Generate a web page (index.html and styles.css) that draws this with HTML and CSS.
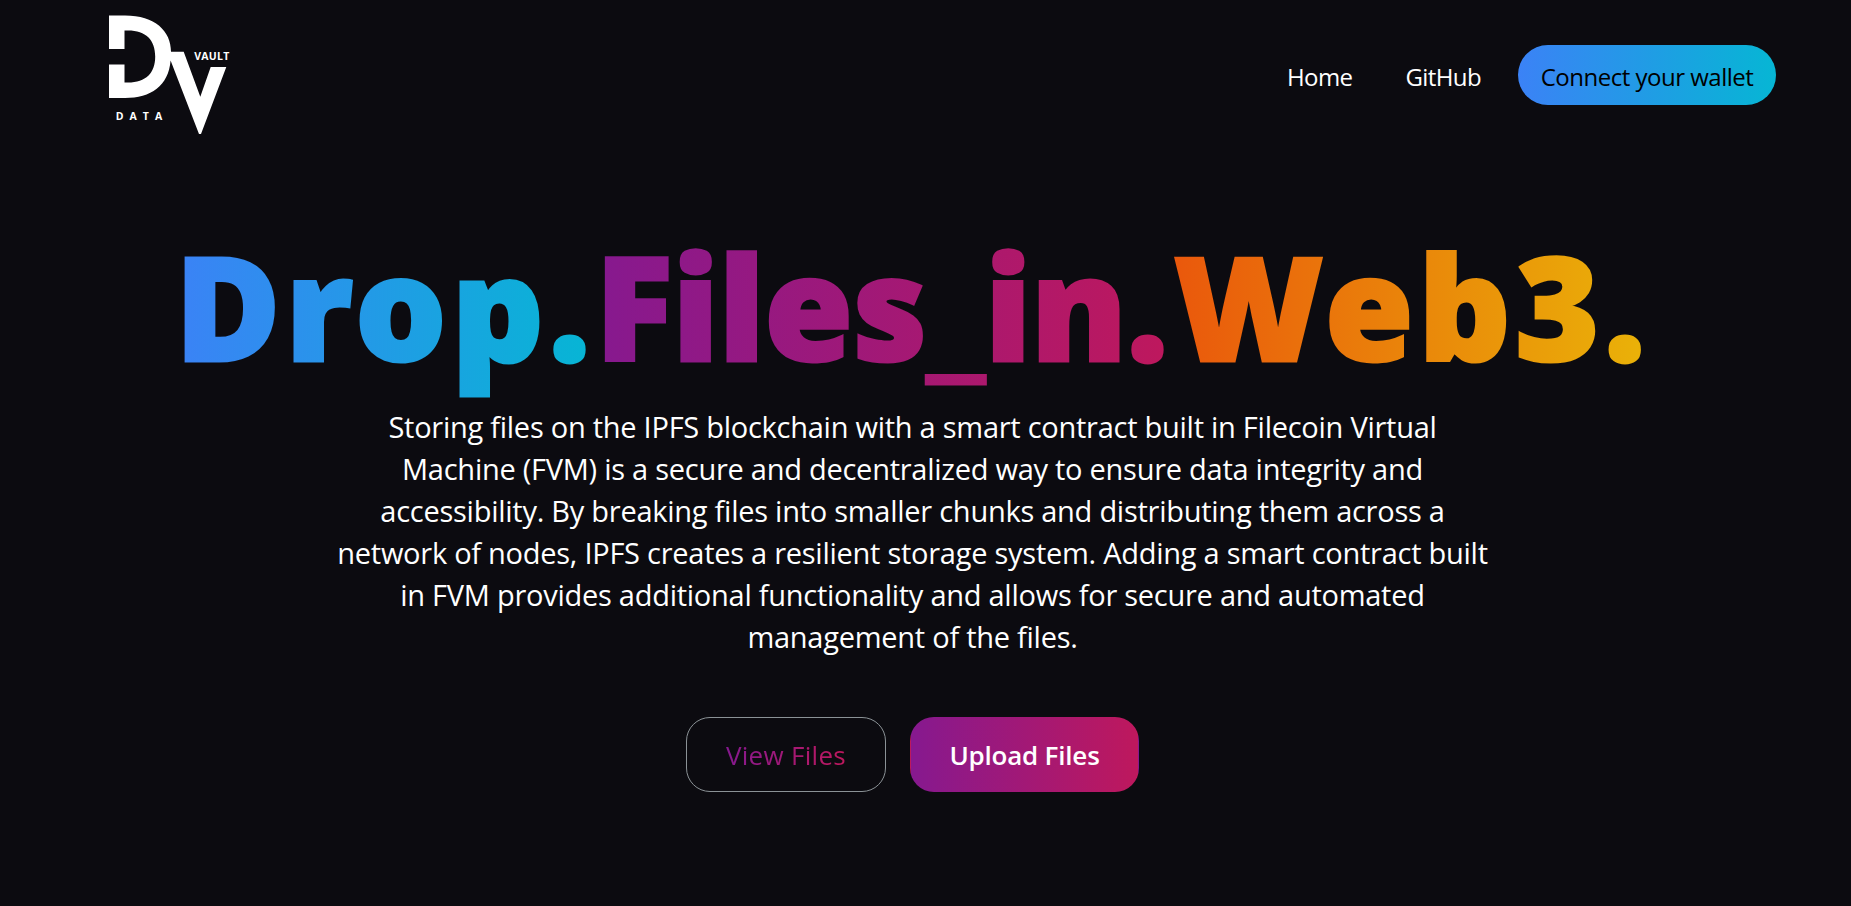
FILE: index.html
```
<!DOCTYPE html>
<html lang="en">
<head>
    <meta charset="UTF-8">
    <meta name="viewport" content="width=device-width, initial-scale=1.0">
    <title>Data Vault</title>
    <link rel="stylesheet" href="styles.css">
</head>
<body>
    <header class="navbar">
        <a class="logo" href="#">
            <svg width="150" height="150" viewBox="90 0 150 150" fill="#fff">
                <path d="M109 15.5H125C155 15.5 171 31 171 51.7H183.7L200.3 96.7L210.7 67H226.3L201 134H199L170.6 60.5C168.5 86 151 98 125 98H109V64.5H124.5V82.5H128C146 82.5 155.2 73 155.2 56.5C155.2 40 146 30.5 128 30.5H124.5V49H109Z"/>
                <text class="logo-text" x="194.3" y="60" textLength="35">VAULT</text>
                <text class="logo-text" x="115.7" y="120" textLength="46.5">DATA</text>
            </svg>
        </a>
        <nav class="nav-links">
            <a class="nav-link" href="#">Home</a>
            <a class="nav-link" href="#">GitHub</a>
            <button class="connect">Connect your wallet</button>
        </nav>
    </header>

    <main class="hero">
        <h1 class="title"><span class="drop">Drop.</span><span class="files">Files<span class="underscore">_</span>in.</span><span class="web">Web3.</span></h1>
        <p class="description">
            Storing files on the IPFS blockchain with a smart contract built in Filecoin Virtual<br>
            Machine (FVM) is a secure and decentralized way to ensure data integrity and<br>
            accessibility. By breaking files into smaller chunks and distributing them across a<br>
            network of nodes, IPFS creates a resilient storage system. Adding a smart contract built<br>
            in FVM provides additional functionality and allows for secure and automated<br>
            management of the files.
        </p>
        <div class="actions">
            <button class="btn btn-view"><span>View Files</span></button>
            <button class="btn btn-upload">Upload Files</button>
        </div>
    </main>
</body>
</html>
```
FILE: styles.css
```
* {
    box-sizing: border-box;
}
body {
    margin: 0;
    min-height: 100vh;
    background: #0c0b10;
    color: #fff;
    font-family: "Open Sans", "Noto Sans", sans-serif;
}
a {
    color: inherit;
    text-decoration: none;
}
button {
    font-family: inherit;
    cursor: pointer;
}

/* Navbar */
.navbar {
    display: flex;
    justify-content: space-between;
    align-items: center;
    height: 150px;
    padding: 0 75px 0 90px;
}
.logo svg {
    display: block;
}
.logo-text {
    font-size: 10.5px;
    font-weight: 700;
}
.nav-links {
    display: flex;
    align-items: center;
}
.nav-link {
    margin-right: 53px;
    padding-top: 2px;
    font-size: 24px;
    letter-spacing: -0.6px;
}
.nav-link:nth-child(2) {
    margin-right: 37px;
}
.connect {
    width: 258px;
    height: 60px;
    padding: 2px 0 0;
    border: none;
    border-radius: 30px;
    background: linear-gradient(to right, #3b82f6, #06b6d4);
    color: #000;
    font-size: 24px;
    font-weight: 400;
    letter-spacing: -0.5px;
}

/* Hero */
.hero {
    width: 1825px;
    padding-top: 80px;
    text-align: center;
}
.title {
    height: 150px;
    margin: 0;
    font-family: "Noto Sans", "Open Sans", sans-serif;
    font-size: 144px;
    font-weight: 900;
    line-height: 150px;
    white-space: nowrap;
}
.drop,
.files,
.web,
.btn-view span {
    color: transparent;
    -webkit-background-clip: text;
    background-clip: text;
}
.drop,
.files,
.web {
    -webkit-text-stroke: 3px transparent;
}
.drop {
    background-image: linear-gradient(to right, #3b82f6, #06b6d4);
    letter-spacing: 4.8px;
}
.files {
    margin-right: 6px;
    background-image: linear-gradient(to right, #86198f, #be185d);
    letter-spacing: -0.6px;
}
.underscore {
    font-size: 132px;
    font-weight: 400;
    line-height: 1;
    vertical-align: -3px;
}
.web {
    background-image: linear-gradient(to right, #ea580c, #eab308);
    letter-spacing: 4.4px;
}
.description {
    margin: 26px 0 59px;
    font-size: 29px;
    line-height: 42px;
    letter-spacing: -0.26px;
}
.actions {
    display: flex;
    justify-content: center;
    gap: 24px;
}
.btn {
    height: 75px;
    padding: 0;
    border-radius: 24px;
    font-size: 26px;
}
.btn-view {
    width: 200px;
    border: 1px solid #8b9296;
    background: transparent;
    letter-spacing: 0.3px;
}
.btn-view span {
    background-image: linear-gradient(to right, #86198f, #be185d);
}
.btn-upload {
    width: 229px;
    border: 1px solid transparent;
    background: linear-gradient(to right, #86198f, #be185d);
    color: #fff;
    font-weight: 600;
    letter-spacing: -0.2px;
}
```
